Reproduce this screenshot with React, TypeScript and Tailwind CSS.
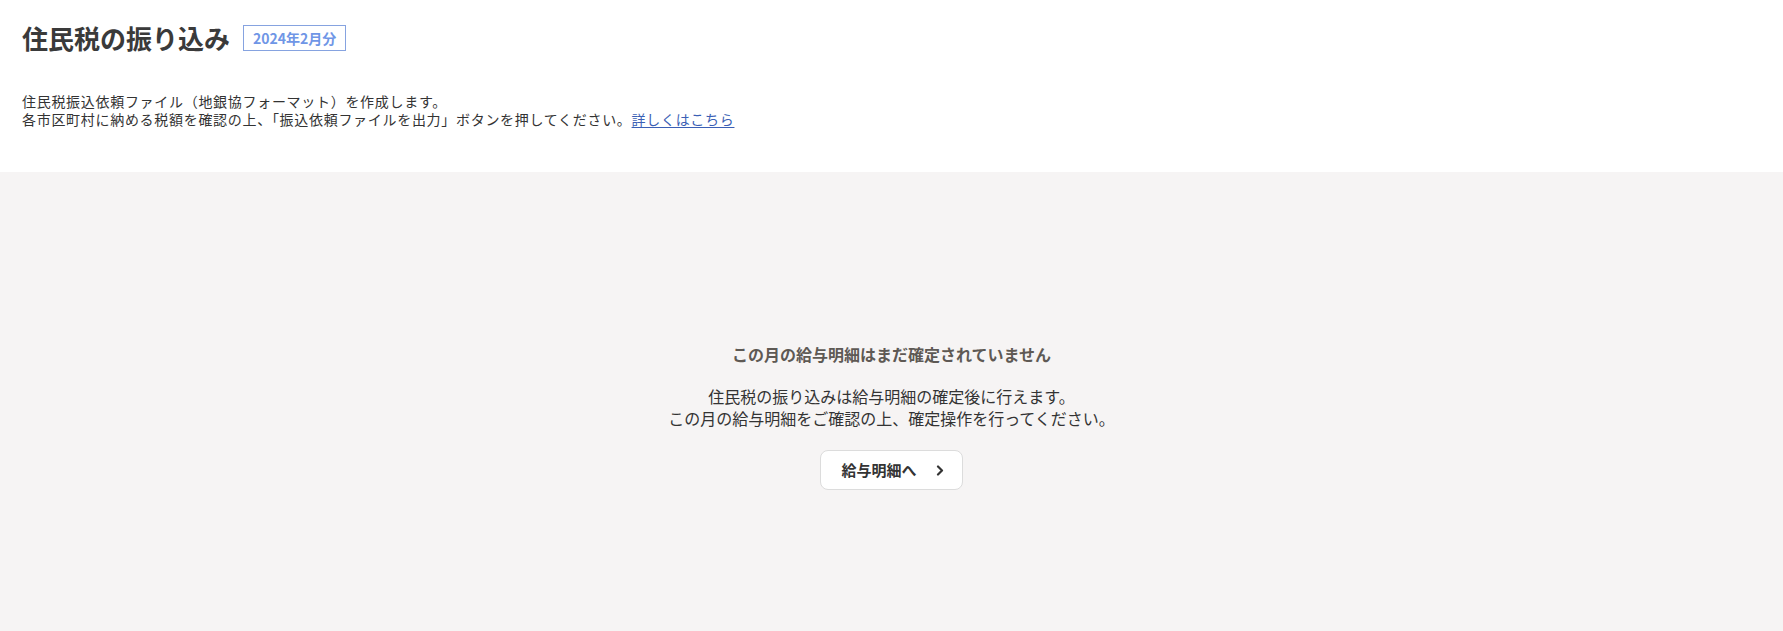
import { useState } from "react";

const FONT = { fontFamily: '"Noto Sans CJK JP", "Noto Sans", sans-serif' };

function ChevronIcon() {
  return (
    <svg width="9" height="11" viewBox="0 0 9 11" fill="none" aria-hidden="true">
      <polyline
        points="2,1.5 6,5.5 2,9.5"
        stroke="#333333"
        strokeWidth="2.2"
        strokeLinecap="round"
        strokeLinejoin="round"
      />
    </svg>
  );
}

function PageHeader() {
  return (
    <div className="bg-white px-[22px] pt-5 pb-[44px]">
      <div className="flex items-center gap-[13px]">
        <h1 className="text-[26px] leading-[36px] font-bold text-[#3a3a3a]">住民税の振り込み</h1>
        <span className="border border-[#86a3e0] px-[9px] text-[14px] leading-[24px] font-bold text-[#6f96e6]">
          2024年2月分
        </span>
      </div>
      <div className="mt-[36px] text-[14px] leading-[18px] tracking-[0.05em] text-[#333333]">
        <p>住民税振込依頼ファイル（地銀協フォーマット）を作成します。</p>
        <p>
          各市区町村に納める税額を確認の上、「振込依頼ファイルを出力」ボタンを押してください。
          <a href="#" className="text-[#3b5fb5] underline underline-offset-2">
            詳しくはこちら
          </a>
        </p>
      </div>
    </div>
  );
}

function EmptyState() {
  const [hover, setHover] = useState(false);
  return (
    <div className="flex flex-1 flex-col items-center bg-[#f6f4f4] pt-[170px] pb-10 text-center">
      <p className="text-[16px] leading-[24px] font-bold text-[#5e5954]">この月の給与明細はまだ確定されていません</p>
      <div className="mt-[19px] text-[16px] leading-[22px] text-[#333333]">
        <p>住民税の振り込みは給与明細の確定後に行えます。</p>
        <p>この月の給与明細をご確認の上、確定操作を行ってください。</p>
      </div>
      <button
        type="button"
        onMouseEnter={() => setHover(true)}
        onMouseLeave={() => setHover(false)}
        className={`mt-[21px] flex h-[40px] items-center gap-[19px] rounded-lg border border-[#dcdcdc] pl-[20px] pr-[17px] text-[15px] font-bold text-[#333333] ${
          hover ? "bg-gray-50" : "bg-white"
        }`}
      >
        <span>給与明細へ</span>
        <ChevronIcon />
      </button>
    </div>
  );
}

export default function App() {
  return (
    <div className="flex min-h-[631px] flex-col bg-white" style={FONT}>
      <PageHeader />
      <EmptyState />
    </div>
  );
}
